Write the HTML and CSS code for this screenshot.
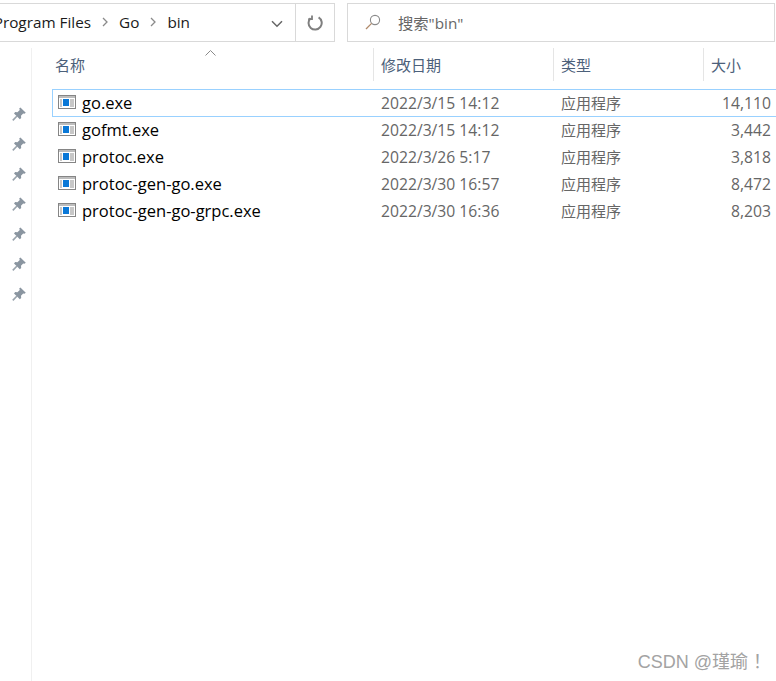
FILE: index.html
```html
<!DOCTYPE html>
<html lang="zh">
<head>
<meta charset="utf-8">
<title>bin</title>
<link rel="stylesheet" href="styles.css">
</head>
<body>
<svg class="defs" width="0" height="0" aria-hidden="true">
  <symbol id="pin" viewBox="0 0 14 14">
    <path d="M8.4 0.4 13.8 5.8 12.4 6.8 11.2 6.4 9 8.8 9.2 11 7.8 12.2 2 6.4 3.2 5 5.4 5.2 7.8 3 7.2 1.6Z" fill="#8a95a0"/>
    <path d="M5 9 0.8 13.4" stroke="#9aa4ad" stroke-width="1.6" fill="none"/>
  </symbol>
  <symbol id="exe" viewBox="0 0 18 14">
    <rect x="0.5" y="0.5" width="17" height="13" fill="#fff" stroke="#858585"/>
    <rect x="1" y="1" width="16" height="2" fill="#bdbdbd"/>
    <rect x="5" y="4" width="6" height="7" fill="#0a78d7"/>
    <path d="M2 5h2M2 7h2M2 9h2M2 11h2M12 5h4M12 7h4M12 9h4M12 11h4" stroke="#8f8f8f" fill="none"/>
  </symbol>
</svg>
<header class="toolbar">
  <div class="address">
    <div class="crumbs">
      <span>Program Files</span>
      <svg class="chev" width="6" height="10" viewBox="0 0 6 10"><path d="M1 1l4 4-4 4" fill="none" stroke="#8a8a8a" stroke-width="1.3"/></svg>
      <span>Go</span>
      <svg class="chev" width="6" height="10" viewBox="0 0 6 10"><path d="M1 1l4 4-4 4" fill="none" stroke="#8a8a8a" stroke-width="1.3"/></svg>
      <span>bin</span>
    </div>
    <div class="drop">
      <svg width="12" height="8" viewBox="0 0 12 8"><path d="M1 1.2l5 5 5-5" fill="none" stroke="#666" stroke-width="1.5"/></svg>
    </div>
    <div class="refresh">
      <svg width="16" height="16" viewBox="0 0 16 16"><path d="M3.6 3.2A6.6 6.6 0 1 0 11.6 2.4" fill="none" stroke="#7f7f7f" stroke-width="2"/><path d="M5 0.4V4.2H1.2" fill="none" stroke="#7f7f7f" stroke-width="1.8"/></svg>
    </div>
  </div>
  <div class="search">
    <svg class="lens" width="16" height="16" viewBox="0 0 16 16"><circle cx="10" cy="6" r="4.6" fill="none" stroke="#8a8a8a" stroke-width="1.1"/><path d="M6.6 9.4 1 15" stroke="#b08a6a" stroke-width="1.3" fill="none"/></svg>
    <span>搜索"bin"</span>
  </div>
</header>
<main class="main">
  <aside class="pins">
    <svg class="pin"><use href="#pin"/></svg>
    <svg class="pin"><use href="#pin"/></svg>
    <svg class="pin"><use href="#pin"/></svg>
    <svg class="pin"><use href="#pin"/></svg>
    <svg class="pin"><use href="#pin"/></svg>
    <svg class="pin"><use href="#pin"/></svg>
    <svg class="pin"><use href="#pin"/></svg>
  </aside>
  <section class="list">
    <div class="head">
      <svg class="sort" width="11" height="6" viewBox="0 0 11 6"><path d="M0.5 5.5l5-5 5 5" fill="none" stroke="#8a8a8a"/></svg>
      <div class="hc name">名称</div>
      <div class="hc">修改日期</div>
      <div class="hc">类型</div>
      <div class="hc">大小</div>
    </div>
    <div class="row selected">
      <div class="file"><svg class="exe"><use href="#exe"/></svg>go.exe</div>
      <div class="cell">2022/3/15 14:12</div><div class="cell kind">应用程序</div><div class="cell size">14,110</div>
    </div>
    <div class="row">
      <div class="file"><svg class="exe"><use href="#exe"/></svg>gofmt.exe</div>
      <div class="cell">2022/3/15 14:12</div><div class="cell kind">应用程序</div><div class="cell size">3,442</div>
    </div>
    <div class="row">
      <div class="file"><svg class="exe"><use href="#exe"/></svg>protoc.exe</div>
      <div class="cell">2022/3/26 5:17</div><div class="cell kind">应用程序</div><div class="cell size">3,818</div>
    </div>
    <div class="row">
      <div class="file"><svg class="exe"><use href="#exe"/></svg>protoc-gen-go.exe</div>
      <div class="cell">2022/3/30 16:57</div><div class="cell kind">应用程序</div><div class="cell size">8,472</div>
    </div>
    <div class="row">
      <div class="file"><svg class="exe"><use href="#exe"/></svg>protoc-gen-go-grpc.exe</div>
      <div class="cell">2022/3/30 16:36</div><div class="cell kind">应用程序</div><div class="cell size">8,203</div>
    </div>
  </section>
</main>
<div class="watermark">CSDN @瑾瑜 ！</div>
</body>
</html>
```

FILE: styles.css
```css
* { box-sizing: border-box; }
html, body { margin: 0; height: 100%; }
body {
  position: relative;
  width: 776px;
  height: 681px;
  overflow: hidden;
  background: #fff;
  font-family: "Open Sans", "Noto Sans CJK SC", sans-serif;
  font-size: 15px;
  color: #000;
}
.defs { position: absolute; }

.toolbar {
  display: flex;
  gap: 12px;
  height: 48px;
  padding: 3px 1px 6px 0;
}
.address {
  width: 335px;
  display: flex;
  border: 1px solid #d9d9d9;
  border-left: 0;
  overflow: hidden;
}
.crumbs {
  flex: 1;
  min-width: 0;
  display: flex;
  justify-content: flex-end;
  align-items: center;
  gap: 11px;
  padding: 0 69px 2px 0;
  white-space: nowrap;
  color: #1a1a1a;
  font-size: 15.3px;
}
.chev { flex: none; }
.drop {
  width: 36px;
  flex: none;
  display: flex;
  align-items: center;
  justify-content: center;
  padding-top: 2px;
}
.refresh {
  width: 39px;
  flex: none;
  border-left: 1px solid #d9d9d9;
  display: flex;
  align-items: center;
  justify-content: center;
}
.search {
  flex: 1;
  display: flex;
  align-items: center;
  gap: 17px;
  padding: 0 0 2px 17px;
  border: 1px solid #d9d9d9;
  color: #666;
  font-size: 15.3px;
}
.main { display: flex; height: 633px; }
.pins {
  width: 32px;
  flex: none;
  border-right: 1px solid #f0f0f0;
  padding: 59px 0 0 12px;
  display: flex;
  flex-direction: column;
  gap: 16px;
}
.pin { width: 14px; height: 14px; display: block; flex: none; }
.list { flex: 1; min-width: 0; }
.head {
  position: relative;
  display: grid;
  grid-template-columns: 341px 180px 150px 1fr;
  height: 33px;
  font-size: 15px;
  color: #4c607a;
}
.sort { position: absolute; left: 173px; top: 2px; }
.hc {
  border-left: 1px solid #e5e5e5;
  padding: 7px 0 0 7px;
  line-height: 20px;
}
.hc.name { border-left: 0; padding-left: 23px; }
.row {
  display: grid;
  height: 27px;
  margin-left: 20px;
  grid-template-columns: 321px 180px 150px 73px;
  align-items: center;
  border: 1px solid transparent;
  border-right: 0;
  position: relative;
  top: 8px;
}
.row.selected { height: 28px; padding-bottom: 1px; border-color: #99d1ff; margin-bottom: -1px; }
.file {
  display: flex;
  align-items: center;
  gap: 6px;
  padding-left: 5px;
  color: #000;
  white-space: nowrap;
  font-size: 16.5px;
}
.exe { width: 18px; height: 14px; flex: none; margin-top: -2px; }
.cell { color: #666; padding-left: 7px; white-space: nowrap; font-size: 15.7px; }
.cell.kind { font-size: 15px; }
.cell.size { text-align: right; padding-right: 6px; padding-left: 0; }
.watermark {
  position: absolute;
  right: 5px;
  top: 651px;
  font-family: "Liberation Sans", "Noto Sans CJK SC", sans-serif;
  font-size: 18px;
  line-height: 22px;
  color: #a3a3a3;
  white-space: nowrap;
}
```
